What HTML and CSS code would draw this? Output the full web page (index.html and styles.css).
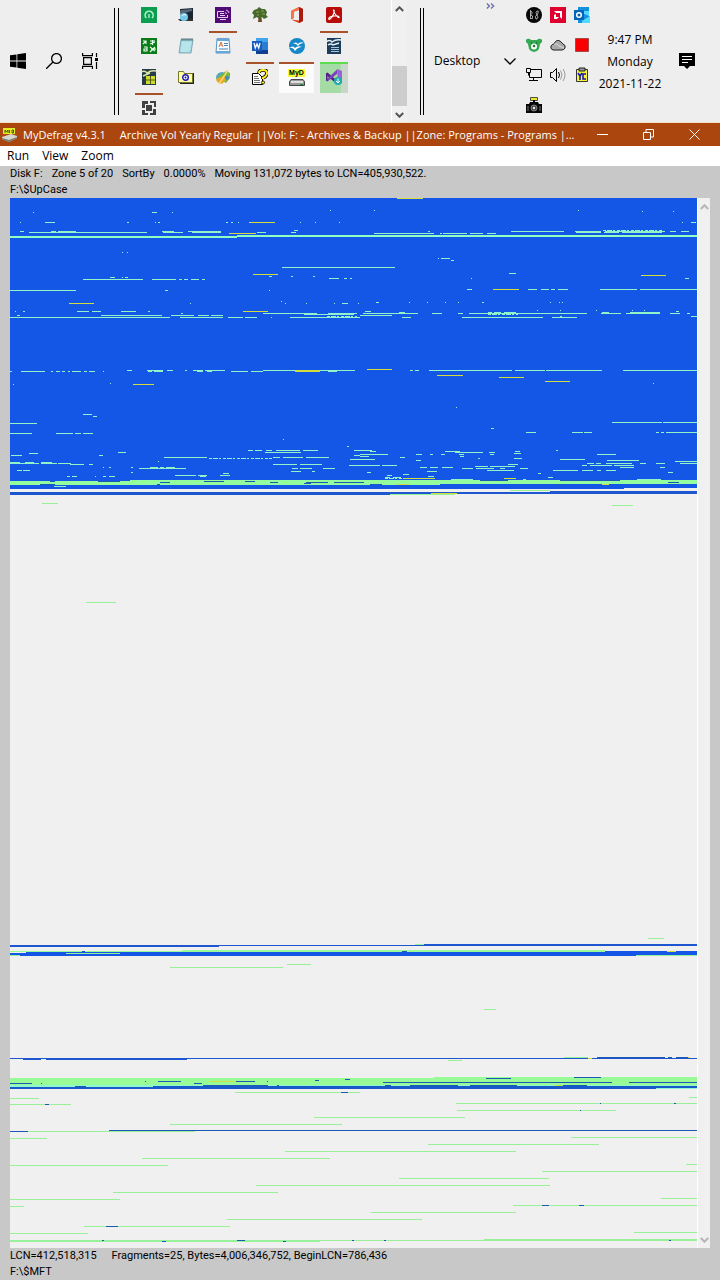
FILE: index.html
```html
<!DOCTYPE html>
<html lang="en">
<head>
<meta charset="utf-8">
<meta name="viewport" content="width=device-width, initial-scale=1">
<title>MyDefrag v4.3.1</title>
<link rel="stylesheet" href="styles.css">
</head>
<body>
<header class="taskbar">
  <nav class="system" aria-label="System">
    <button class="icon-btn" aria-label="Start"><svg viewBox="0 0 16 16"><path d="M0 2.3 6.5 1.4V7.6H0zM7.3 1.3 16 0V7.6H7.3zM0 8.4H6.5V14.6L0 13.7zM7.3 8.4H16V16L7.3 14.8z"/></svg></button>
    <button class="icon-btn" aria-label="Search"><svg viewBox="0 0 16 16" fill="none" stroke="#000" stroke-width="1.3"><circle cx="10.5" cy="5.5" r="4.9"/><path d="M7 9 0 16"/></svg></button>
    <button class="icon-btn" aria-label="Task view"><svg viewBox="0 0 16 16" fill="none" stroke="#000" stroke-width="1.2"><path d="M.6 0V2.6H10.4V0M.6 16V13.4H10.4V16M1.6 4.6H9.4V11.4H1.6zM14.5 0V4M14.5 9V16"/><path d="M13 5h3v3h-3z" fill="#000" stroke="none"/></svg></button>
  </nav>
  <div class="divider"></div>
  <nav class="apps" aria-label="Applications">
    <button class="app" aria-label="Green disc"><svg viewBox="0 0 16 16"><path fill="#0a9f50" d="M0 0h16v16H0z"/><path d="M5.3 11A4 4 0 1 1 11 11" fill="none" stroke="#b8f0cf" stroke-width="1.6"/><path d="M8 7v4" stroke="#a8e8c0" stroke-width="1.5"/></svg></button>
    <button class="app" aria-label="Computer"><svg viewBox="0 0 16 16"><path fill="#1c2632" d="M2 2 15 1V12H3z"/><path fill="#55697a" d="M3 3 14 2V4L3 7z"/><path fill="#303030" d="M0 12H15V14H2z"/><circle cx="6" cy="10" r="4" fill="#75c9e9"/><path d="M4 9a3 3 0 0 1 4-1" stroke="#fff" fill="none"/></svg></button>
    <button class="app running" aria-label="Remote screen"><svg viewBox="0 0 16 16"><path fill="#510b76" d="M0 0h16v16H0z"/><path d="M9 4.500H2.500v6h10V8M5 12.500h6M5 6.500h4M5 8.500h5M10 5.500a2 2 0 0 1 1.500 1.500M11 3a4 4 0 0 1 3 3" fill="none" stroke="#e6c8f3"/></svg></button>
    <button class="app" aria-label="Family tree"><svg viewBox="0 0 16 16"><path fill="#6b4a25" d="M7 7h2l1 8H6z"/><path fill="#48692c" d="M2 3 5 2 7 0 10 2 13 2 15 5 14 8 16 10 12 12 10 10 7 12 5 10 1 12 2 8 0 6z"/><path d="M4 5h3M9 4h3M5 8h2M10 7h3" stroke="#87a548"/></svg></button>
    <button class="app" aria-label="Office"><svg viewBox="0 0 16 16"><path fill="#e33d18" d="M10 0 14 2V14L10 16 2 12.5 10 13.5V3L5 4.5V11L2 12V4z"/><path fill="#a91d10" d="M10 0 14 2V14L10 16z"/><path fill="#f57549" d="M2 4 10 0V3L5 4.5V11L2 12z"/></svg></button>
    <button class="app running" aria-label="Acrobat"><svg viewBox="0 0 16 16"><rect width="16" height="16" rx="2" fill="#b70c08"/><path d="M7.5 3C9 3 8 7 6 10S2 13 3 11 12 8 13 10 8 8 7.5 3z" fill="none" stroke="#fff" stroke-width="1.2"/></svg></button>

    <button class="app" aria-label="Translator"><svg viewBox="0 0 16 16"><path fill="#0b7c18" d="M0 0h16v16H0z"/><path d="M2 3h3v3M2 6l3-3M9 3h5M11.5 2v5M9 6l5-2M3 9h3v4H3v-2h3M9 9l5 4M14 9l-5 5M10 11h5" fill="none" stroke="#e3ffe5" stroke-width="1.2"/></svg></button>
    <button class="app" aria-label="Notepad"><svg viewBox="0 0 16 16"><path fill="#a8dce5" stroke="#5e8d9a" stroke-width=".7" d="M3 1.5H15L13 15H1z"/><path d="M4 5h9M4 7h9M3 9h9M3 11h9M3 13h8" stroke="#d8f3f7" stroke-width=".7"/><path d="M4 0v3M6 0v3M8 0v3M10 0v3M12 0v3M14 0v3" stroke="#48606c" stroke-width=".8"/></svg></button>
    <button class="app" aria-label="WordPad"><svg viewBox="0 0 16 16"><path fill="#f7fcff" stroke="#5793c3" d="M2 .7H14L15 15H1z"/><path fill="#67a8d7" d="M2 1h12v2H2zM1 13h14v2H1z"/><path d="M4 9 6 4 8 9M5 7h2" stroke="#d27740" fill="none"/><path d="M9 5.500h4M9 7.500h4M4 11h9" stroke="#4784ba"/></svg></button>
    <button class="app running" aria-label="Word"><svg viewBox="0 0 16 16"><path fill="#2b7cd3" d="M4 0h12v16H4z"/><path fill="#41a5ee" d="M4 0h12v4H4z"/><path fill="#103f91" d="M4 12h12v4H4z"/><path fill="#185abd" d="M0 3h10v10H0z"/><path d="m2 5 1.3 5L5 6l1.7 4L8 5" fill="none" stroke="#fff" stroke-width="1.3"/></svg></button>
    <button class="app running wide" aria-label="OpenOffice"><svg viewBox="0 0 16 16"><circle cx="8" cy="8" r="8" fill="#1688c8"/><path d="M4 6Q7 3 9 6 11 3 15 5 11 5 9 8 7 5 4 6M0 10Q4 7 6 10 9 7 13 9 9 9 6 13 4 9 0 10" fill="#fff"/></svg></button>
    <button class="app running alert" aria-label="Writer"><svg viewBox="0 0 16 16"><path fill="#1d3c5b" d="M1 0h14v16H1z"/><path d="M0 4Q4 1 6 4 10 1 15 2M2 7Q5 5 7 7L13 5" fill="none" stroke="#e4f3fb" stroke-width="1.4"/><path d="M5 9.500h8M5 11.500h8M5 13.500h8" stroke="#a9c8db"/></svg></button>

    <button class="app running" aria-label="Spreadsheet"><svg viewBox="0 0 16 16"><path fill="#263d47" d="M1 0h14v16H1z"/><path d="M0 3Q4 1 6 4 10 1 15 2M2 7 9 4" fill="none" stroke="#dce8a7" stroke-width="1.4"/><path fill="#cfdb27" d="M5 7h9v8H5z"/><path d="M9.500 7v8M5 11h9" stroke="#526017"/></svg></button>
    <button class="app" aria-label="Folder"><svg viewBox="0 0 16 16"><path fill="#222" d="M2 4h14v11H2z"/><path fill="#ffffa4" stroke="#77772b" d="M.500 2.500h5l1 2h8v9H.5z"/><circle cx="7.500" cy="8.500" r="2.800" fill="#fff" stroke="#1916b3" stroke-width="1.400"/><circle cx="7.500" cy="8.500" r="1" fill="#1916b3"/></svg></button>
    <button class="app" aria-label="Paint"><svg viewBox="0 0 16 16"><path fill="#55a8c3" d="M1 8Q2 3 8 3l3 3-4 3-6 1z"/><path fill="#75b83c" d="M3 8 11 2 15 4V9l-4 5-5-3z"/><path fill="#e8a824" d="M1 10 8 7 12 10 7 15 2 13z"/><path d="m4 15 9-14" stroke="#f5d779" stroke-width="1.500"/><circle cx="12" cy="9" r="2" fill="#458ac5"/></svg></button>
    <button class="app" aria-label="Help file"><svg viewBox="0 0 16 16"><path fill="#fff" stroke="#000" d="M.500 4.500h6l4 4v7H.5z"/><path d="M2 7.500h4M2 9.500h5M2 11.500h6M2 13.500h6" stroke="#333" stroke-width=".7"/><path d="M7 4q0-3 4-3t4 3-4 5v1" fill="none" stroke="#000" stroke-width="3.500"/><path d="M7 4q0-3 4-3t4 3-4 5v1" fill="none" stroke="#ffed21" stroke-width="2"/><circle cx="11" cy="13.500" r="1.600" fill="#ffed21" stroke="#000" stroke-width=".8"/></svg></button>
    <button class="app active" aria-label="MyDefrag"><span class="myd">MyD</span><svg class="drive" viewBox="0 0 16 7"><path fill="#999" stroke="#444" d="M2 .5h12l1.500 2v4H.5v-4z"/><path fill="#ddd" d="M2 2h12v2H2z"/><path fill="#1b8f36" d="M11 5h3v1h-3z"/></svg></button>
    <button class="app download" aria-label="Visual Studio installer"><svg viewBox="0 0 16 16"><path fill="#52218a" d="M0 4.500 1.500 3.500 12 12.500V16L0 6z"/><path fill="#7b45b5" d="M0 11 11.500 0V4.500L1.500 12.500 0 11.500z"/><path fill="#52218a" d="M0 4.500h1.500v7.500L0 11.500z"/><path fill="#9a62d8" d="m11.500 0 4.500 2v12l-4.500 2z"/><circle cx="12" cy="12" r="4" fill="#22abad"/><path d="M12 9.500v4.500M10 12l2 2 2-2" fill="none" stroke="#fff"/></svg></button>

    <button class="app" aria-label="Frame tool"><svg viewBox="0 0 16 16" fill="#414141"><path d="M5 5h6v6H5zM1 1h6v3H4v4H1zM9 1h6v6h-2V3H9zM12 9h3v6H9v-2h3zM1 10h3v3h3v2H1z"/></svg></button>
  </nav>
  <div class="app-scroll">
    <button class="arrow" aria-label="Scroll up"><svg viewBox="0 0 9 6"><path d="M.8 5 4.500 1.300 8.200 5" fill="none" stroke="#555" stroke-width="2"/></svg></button>
    <div class="thumb"></div>
    <button class="arrow" aria-label="Scroll down"><svg viewBox="0 0 9 6"><path d="M.8 1 4.500 4.700 8.200 1" fill="none" stroke="#555" stroke-width="2"/></svg></button>
  </div>
  <div class="divider narrow"></div>
  <div class="desktop">
    <button class="more" aria-label="More toolbars"><svg viewBox="0 0 9 6"><path d="m.8.5 2.700 2.500L.8 5.500M5 .5 7.700 3 5 5.500" fill="none" stroke="#6c6caa" stroke-width="1.300"/></svg></button>
    <button class="desktop-btn">Desktop <svg viewBox="0 0 12 7"><path d="m.5.500 5.500 5.500L11.500.5" fill="none" stroke="#000" stroke-width="1.300"/></svg></button>
  </div>
  <div class="tray">
    <button class="icon-btn" aria-label="Audio"><svg viewBox="0 0 16 16"><circle cx="8" cy="8" r="8" fill="#080808"/><path d="M4.500 3v9M4.500 4.500h1q2 2-1 3.500 3 0 2 3.500h-2M10 12q-2-3 1-4-2-3 0-4t1 2l-1 2q2 2 0 4z" fill="none" stroke="#ccc" stroke-width=".8"/></svg></button>
    <button class="icon-btn" aria-label="AMD"><svg viewBox="0 0 16 16"><path fill="#df0030" d="M0 0h16v16H0z"/><path fill="#fff" d="M4 4h8v8l-2-2V6H6zM4 8l2-1v3h3l-2 2H4z"/></svg></button>
    <button class="icon-btn" aria-label="Outlook"><svg viewBox="0 0 16 16"><path fill="#1490df" d="M4 0h11v9l1 1v6H4z"/><path fill="#50d9ff" d="M10 4h5v5l-5-2zM8 14l8-5v7H8z"/><path fill="#0364b8" d="M0 3h10v10H0z"/><circle cx="5" cy="8" r="2.300" fill="none" stroke="#fff" stroke-width="1.500"/></svg></button>
    <button class="icon-btn" aria-label="Bear"><svg viewBox="0 0 16 16"><path fill="#35a852" d="M0 3q1-2 4-1l1 1h6l1-1q3-1 4 1v2l-2 2-1 5q-2 3-5 3t-5-3L2 7 0 5z"/><circle cx="8" cy="9.500" r="3" fill="#fff"/><circle cx="8" cy="9" r="1.300" fill="#25733a"/><path d="M5 6h1M10 6h1" stroke="#124c22"/></svg></button>
    <button class="icon-btn" aria-label="OneDrive"><svg viewBox="0 0 16 16"><path fill="#aaa" stroke="#222" d="M3 13q-3-1-2-4 1-2 3-2 2-5 6-3l3 3q3 1 2 4-1 2-3 2z"/><path d="M4 7q3-1 5 2l5 2" fill="none" stroke="#ddd"/></svg></button>
    <button class="icon-btn" aria-label="Recording"><svg viewBox="0 0 16 16"><path fill="#fa0000" stroke="#6b2d2d" stroke-width=".6" d="M1.500 1.500h13v13h-13z"/></svg></button>
    <button class="icon-btn" aria-label="Network"><svg viewBox="0 0 16 16" fill="none" stroke="#000"><path d="M5 2.500h10.500v8H3.500V6M7.500 11v2.500M3 13.500h9M.5 1.500h4v4h-4zM2.500 5.500v3"/></svg></button>
    <button class="icon-btn" aria-label="Volume"><svg viewBox="0 0 16 16" fill="none" stroke="#000"><path d="M.5 5.500h2l4-4v13l-4-4h-2zM8.500 5q2 3 0 6"/><path d="M10.500 3.500q3 4.500 0 9M13 2q4 6 0 12" stroke="#999"/></svg></button>
    <button class="icon-btn" aria-label="Clipboard"><svg viewBox="0 0 16 16"><path fill="#f7f63b" stroke="#333" d="M2.500 2.500h11v12h-11z"/><path fill="#999" stroke="#222" d="M5 1h6v3H5z"/><path d="m4 6 2 3v4M8 6 6 9M12 7H9v5h3" fill="none" stroke="#1111b0" stroke-width="1.500"/></svg></button>
    <button class="icon-btn" aria-label="Camera"><svg viewBox="0 0 16 16"><path fill="#e9e332" stroke="#111" stroke-width=".7" d="M4.500.5h7v3h-7z"/><path fill="#080808" d="M7 3h2v2h3l1 2h3v9H0V7h3l1-2h3z"/><circle cx="8" cy="11" r="3" fill="#444" stroke="#999" stroke-width=".8"/><circle cx="8" cy="11" r="1.200" fill="#eee"/><path d="M2 9v5M14 9v5" stroke="#777"/></svg></button>
  </div>
  <div class="clock"><span>9:47 PM</span><span>Monday</span><span>2021-11-22</span></div>
  <button class="notice" aria-label="Notifications"><svg viewBox="0 0 16 16"><path d="M0 0h16v13h-5l-3 3-3-3H0z"/><path d="M3 3.500h10M3 6.500h10M3 9.500h6" stroke="#fff"/></svg></button>
</header>

<main class="window">
  <div class="titlebar">
    <svg class="logo" viewBox="0 0 15 14"><path fill="#e7ed25" d="M1 0h12v6H1z"/><path d="M3 5V2l1.500 2L6 2v3M7.500 2v3M10 2v3h1.500V2z" fill="none" stroke="#313c0c" stroke-width=".8"/><path fill="#d6d6cf" d="M0 9 9 6l6 2v2l-8 4-7-3z"/><path fill="#797973" d="m0 10 7 2 8-3v1l-8 4-7-3z"/></svg>
    <h1 class="title"><span>MyDefrag v4.3.1</span><span>Archive Vol Yearly Regular ||Vol: F: - Archives &amp; Backup ||Zone: Programs - Programs |...</span></h1>
    <div class="controls">
      <button aria-label="Minimize"><svg viewBox="0 0 11 11"><path d="M0 5.500h11"/></svg></button>
      <button aria-label="Restore"><svg viewBox="0 0 11 11"><path d="M.5 3.500h7v7h-7zM3 3V.5h7.500V8H8"/></svg></button>
      <button aria-label="Close"><svg viewBox="0 0 11 11"><path d="m.5.500 10 10M10.500.5l-10 10"/></svg></button>
    </div>
  </div>
  <nav class="menu" aria-label="Menu"><button>Run</button><button>View</button><button>Zoom</button></nav>
  <div class="status">
    <p class="line"><span>Disk F:</span><span>Zone 5 of 20</span><span>SortBy</span><span>0.0000%</span><span>Moving 131,072 bytes to LCN=405,930,522.</span></p>
    <p class="line">F:\$UpCase</p>
  </div>
  <div class="disk">
    <svg class="map" viewBox="10 198 687 1050" preserveAspectRatio="none" role="img" aria-label="Disk map">
      <path fill="#1457e6" d="M10 198H697V488H624V489H10z"/>
      <path fill="#1d56cf" d="M10 492H550V491H697V494H390V495H10z"/>
      <path fill="#8fffc4" d="M10 236H237V235H697V237H237V238H10z"/>
      <path fill="#94fd9e" d="M10 481H130V480H697V484H440V485H10z"/>
      <path fill="#1d56cf" d="M10 945H424V944H697V946H424V946H219V947H10zM10 1058H697V1059H187V1060H46V1059H41V1060H23V1059H10z"/>
      <path fill="#98fb98" d="M10 951H182V950H605V952H10zM10 1078H434V1077H697V1087H10z"/>
      <path fill="#8ff7cf" d="M10 1085H697V1089H10z"/>
      <path fill="#1457e6" d="M10 953H26V952H605V951H697V955H636V956H10z"/>
      <path fill="#1759c8" d="M10 1087H153V1086H697V1088H656V1089H10z"/>
      <g class="cells" transform="translate(0 .5)">
        <path class="free" d="M33 212h1M152 212h5M172 212h1M330 210h1M20 222h1M45 222h10M127 222h2M155 222h1M158 222h2M226 222h2M231 222h2M238 222h1M300 222h1M315 222h1M339 222h1M20 231h4M51 231h5M58 231h18M162 231h12M188 231h33M29 232h118M163 232h20M192 232h29M257 232h9M291 232h5M294 230h4M374 210h1M578 210h1M642 211h1M673 211h1M682 222h1M691 222h5M374 233h60M440 233h2M443 233h24M470 233h13M487 233h9M428 231h2M511 231h53M575 231h26M605 231h60M670 231h6M681 231h8M576 232h25M604 232h15M622 232h40"/>
        <path class="free" d="M122 252h1M127 252h1M282 267h113M269 276h3M291 276h2M313 276h2M110 277h5M122 277h1M125 277h3M83 279h60M152 279h24M179 279h3M184 279h4M191 279h8M202 279h3M329 278h10M344 278h3M350 278h2M10 290h66M165 290h3M269 290h1M190 303h1M281 301h1M285 303h1M306 303h1M334 303h1M342 303h6M358 303h1M15 311h1M23 311h2M77 311h12M92 311h9M121 311h15M148 311h2M17 315h3M101 315h61M171 315h23M198 315h11M211 315h12M181 313h2M263 313h54M328 313h29M304 314h50M10 317h160M180 317h43M228 317h15M245 317h12M271 317h1M290 317h70"/>
        <path class="free" d="M438 258h1M441 258h9M451 260h3M509 273h7M471 278h1M685 278h4M467 289h5M528 289h9M541 289h8M551 289h4M558 289h10M600 289h37M640 289h57M376 302h3M409 302h1M427 302h1M445 302h1M458 302h1M482 302h2M550 302h1M559 302h1M562 302h1M365 311h6M537 310h1M560 310h1M596 310h1M632 310h1M644 310h1M676 311h3M363 313h55M432 313h10M458 313h5M469 313h118M601 313h20M626 313h34M670 313h10M687 313h3M399 312h6M488 312h4M494 312h7M504 312h12M602 312h7M630 312h30M360 315h32M402 317h9M462 317h81M552 317h25M691 316h6M560 316h2"/>
        <path class="free" d="M10 371h2M21 371h24M51 371h2M56 371h4M62 371h3M68 371h2M72 371h9M84 371h3M89 371h6M103 371h1M127 370h5M147 370h16M167 370h6M185 370h2M193 370h10M205 370h20M263 370h92M148 371h4M154 371h9M197 371h6M207 371h5M231 371h17M251 371h12M410 370h3M415 370h4M429 370h83M515 370h30M546 370h56M623 370h74M328 371h9M110 383h1M13 384h1M653 383h1M456 407h1M83 414h9M93 416h4M10 423h27M612 422h50M663 422h34M491 428h3M10 433h22M56 433h17M75 433h6M83 433h10M526 432h10M572 432h11M584 432h8M656 432h3M661 432h3M666 432h31M283 439h1M347 446h2"/>
        <path class="free" d="M248 450h5M255 450h7M266 450h6M276 450h24M303 450h15M118 452h8M265 452h36M29 453h9M11 455h11M99 455h4M354 450h6M164 457h43M273 457h7M283 457h20M306 457h23M354 455h6M10 462h10M25 462h9M41 462h11M10 463h29M41 463h16M58 463h13M350 459h10M70 464h14M89 464h4M273 464h24M300 464h22M349 465h11M103 467h1M109 467h2M131 467h2M150 467h8M160 467h4M166 467h9M139 468h47M292 468h6M300 468h12M323 468h12M17 470h5M23 470h7M291 471h10M312 471h3M175 475h21M198 475h9M220 475h10M67 476h3M72 476h5M95 476h1M103 476h3M109 476h6M200 476h6M223 473h6M158 461h1M131 472h2M54 486h12"/>
        <path class="free" d="M360 450h12M556 450h2M445 451h15M515 451h5M370 451h6M455 452h28M489 452h6M514 453h7M360 454h28M416 454h6M430 454h3M441 454h4M459 454h5M490 454h4M597 454h19M360 456h9M400 457h5M460 456h4M360 459h15M560 459h25M478 458h2M514 458h8M416 460h5M607 460h32M675 461h22M680 463h17M587 463h7M596 463h5M606 463h26M640 463h6M656 463h9M360 465h20M382 465h15M508 464h10M582 465h5M590 465h22M614 465h20M420 467h7M430 467h8M442 467h11M475 466h13M490 466h25M620 467h14M660 467h5M462 468h11M476 468h18M500 468h5M520 468h8M487 470h27M553 470h25M582 470h11M597 470h4M606 470h10M427 471h10M367 472h4M538 473h3M668 472h5M387 475h5M403 474h6M385 477h5M393 477h8M428 476h6M548 477h5M451 479h22M523 479h3M637 479h24"/>
        <path class="free dense" d="M209 458h63M385 478h18M488 314h30M603 230h60M327 316h30"/>
        <path class="free soft" d="M42 503h16M612 505h21M86 602h30M390 494h65M510 490h40M648 938h16M415 944h9M66 953h54M10 955h10M636 955h61M287 964h24M170 967h113M484 1009h12M564 1057h24M448 1060h14"/>
        <path class="free soft" d="M235 1092h125M689 1097h8M10 1098h29M10 1104h61M456 1103h241M457 1110h159M314 1117h151M170 1124h172M28 1131h167M571 1137h126M10 1138h37M428 1144h171M285 1151h231M142 1158h188M686 1164h11M10 1165h158M542 1171h155M399 1178h150M256 1185h294M113 1192h165M661 1198h36M10 1199h110M513 1205h184M10 1206h14M371 1212h145M227 1219h195M84 1226h146M634 1232h63M10 1233h78M10 1240h687M10 1241h310M484 1239h213"/>
        <path class="used" d="M50 481h5M98 481h22M160 482h10M204 481h20M245 481h10M270 482h8M306 482h22M334 482h30M304 483h7M40 484h15M157 484h3M370 484h12M555 484h7M668 482h11M480 480h28M560 480h60M82 951h3M402 951h5M109 1130h588M10 1131h18"/>
        <path class="used" d="M597 1057h68M668 1057h4M676 1057h14M10 1083h22M41 1083h1M194 1083h8M145 1081h1M158 1081h23M236 1081h19M267 1081h1M315 1080h4M345 1079h5M75 1086h11M203 1085h65M277 1085h2M486 1078h25M574 1077h27M383 1082h229M629 1082h68M385 1085h6M410 1085h48M470 1085h47M563 1085h24M341 1092h7M45 1104h4M600 1103h1M674 1103h2M580 1110h1M542 1205h7M579 1205h5M106 1226h12M102 1240h2M162 1241h4M237 1240h8M283 1241h3M352 1240h2M384 1240h2M669 1240h2"/>
        <path class="frag" d="M397 198h26M249 222h26M229 233h27M253 274h25M69 303h25M243 311h25M641 275h25M493 289h26M295 370h25M295 371h25M367 369h25M437 375h26M499 377h25M545 381h25M133 384h21M403 478h32M504 478h12M397 484h13M602 484h7M431 493h26M667 951h9M588 1058h4M688 1057h2M210 1081h25M556 1085h6"/>
      </g>
    </svg>
    <div class="map-scroll">
      <button class="arrow" aria-label="Scroll map up"><svg viewBox="0 0 9 6"><path d="M.8 5 4.500 1.300 8.200 5" fill="none" stroke="#b5b5b5" stroke-width="2"/></svg></button>
      <button class="arrow" aria-label="Scroll map down"><svg viewBox="0 0 9 6"><path d="M.8 1 4.500 4.700 8.200 1" fill="none" stroke="#b5b5b5" stroke-width="2"/></svg></button>
    </div>
  </div>
  <footer class="status">
    <p class="line wide-gap"><span>LCN=412,518,315</span><span>Fragments=25, Bytes=4,006,346,752, BeginLCN=786,436</span></p>
    <p class="line">F:\$MFT</p>
  </footer>
</main>
</body>
</html>
```
FILE: styles.css
```css
* { box-sizing: border-box; }

body {
  margin: 0;
  min-height: 100vh;
  display: flex;
  flex-direction: column;
  background: #c8c8c8;
  color: #000;
  font: 12px/16px "Open Sans", "Noto Sans", sans-serif;
}

button {
  margin: 0;
  padding: 0;
  border: 0;
  background: none;
  color: inherit;
  font: inherit;
}

svg { display: block; }

.taskbar {
  display: flex;
  align-items: stretch;
  background: #eee;
  border-bottom: 1px solid #f3e3c4;
  padding-right: 25px;
}

.system {
  display: flex;
  align-items: center;
  gap: 20px;
  padding: 0 16px 0 10px;
}

.icon-btn svg,
.app svg,
.notice svg {
  width: 16px;
  height: 16px;
}

.divider {
  width: 5px;
  margin: 8px 11px 7px 0;
  border: solid #000;
  border-width: 0 1px;
}

.divider.narrow {
  width: 4px;
  margin: 8px 10px 7px 13px;
}

.apps {
  flex: 1;
  display: grid;
  grid-template-columns: repeat(6, 37px);
  grid-template-rows: repeat(3, 31px) 27px;
  justify-items: center;
  padding-top: 2px;
}

.app {
  width: 28px;
  display: flex;
  flex-direction: column;
  align-items: center;
  padding-top: 5px;
  border-bottom: 2px solid transparent;
}

.app.running { border-bottom-color: #a9532b; }
.app.wide { width: 35px; }
.app.alert { border-bottom-color: #5bdc50; }
.app.active { width: 35px; background: #fbfbfb; background-clip: padding-box; }
.app.download { background: linear-gradient(90deg, #a5dca5 75%, #c9d6c9 75%); background-clip: padding-box; }

.myd {
  padding: 0 1px;
  background: #f8f83a;
  font: bold 7px/8px "Liberation Sans", Arial, sans-serif;
}

.app .drive {
  height: 7px;
  margin-top: 2px;
}

.app-scroll {
  width: 16px;
  display: flex;
  flex-direction: column;
  justify-content: space-between;
  padding: 6px 0 4px;
  border-left: 1px solid #fff;
  background: #f0f0f0;
}

.thumb {
  height: 40px;
  margin: auto 0 6px;
  background: #cdcdcd;
}

.arrow {
  display: flex;
  justify-content: center;
}

.arrow svg {
  width: 9px;
  height: 6px;
}

.desktop {
  width: 88px;
  display: grid;
  grid-template-rows: 12px 1fr 12px;
}

.more { justify-self: center; padding-left: 24px; }
.more svg { width: 9px; height: 6px; }

.desktop-btn {
  display: flex;
  align-items: center;
  justify-content: space-between;
  padding-right: 6px;
}

.desktop-btn svg { width: 12px; height: 7px; }

.tray {
  display: grid;
  grid-template-columns: repeat(3, 24px);
  grid-auto-rows: 30px;
  justify-items: center;
  align-content: start;
}

.clock {
  width: 72px;
  display: flex;
  flex-direction: column;
  justify-content: center;
  padding-top: 2px;
  text-align: center;
  line-height: 22px;
}

.notice { margin-left: auto; padding-left: 13px; }

.window {
  flex: 1;
  display: flex;
  flex-direction: column;
}

.titlebar {
  height: 23px;
  display: flex;
  align-items: center;
  padding: 0 20px 0 2px;
  background: #ab460f;
  color: #fff;
}

.logo { width: 15px; height: 14px; }

.title {
  flex: 1;
  min-width: 0;
  display: flex;
  gap: 14px;
  margin: 0 0 0 6px;
  font-size: 11px;
  font-weight: 400;
  white-space: nowrap;
}

.controls { display: flex; gap: 35px; }

.controls svg {
  width: 11px;
  height: 11px;
  fill: none;
  stroke: #fff;
}

.menu {
  display: flex;
  gap: 13px;
  padding: 2px 7px;
  background: #fff;
}

.status {
  padding: 0 10px;
  font: 11px/16px Roboto, "Liberation Sans", sans-serif;
}

.line {
  display: flex;
  gap: 9px;
  margin: 0;
  white-space: nowrap;
}

.wide-gap { gap: 15px; }

.disk {
  flex: 1;
  display: flex;
  margin: 0 10px;
  background: #f0f0f0;
}

.map {
  flex: 1;
  min-width: 0;
  height: auto;
  shape-rendering: crispEdges;
}

.cells path { fill: none; stroke-width: 1px; }
.cells .free { stroke: #8ff5c8; }
.cells .soft { stroke: #98f098; }
.cells .dense { stroke-dasharray: 3 1 5 1 2 2; }
.cells .used { stroke: #1c58b4; }
.cells .frag { stroke: #d6dc3c; }

.map-scroll {
  width: 13px;
  display: flex;
  flex-direction: column;
  justify-content: space-between;
  padding: 6px 0 5px;
  border-left: 1px solid #fff;
}
```
